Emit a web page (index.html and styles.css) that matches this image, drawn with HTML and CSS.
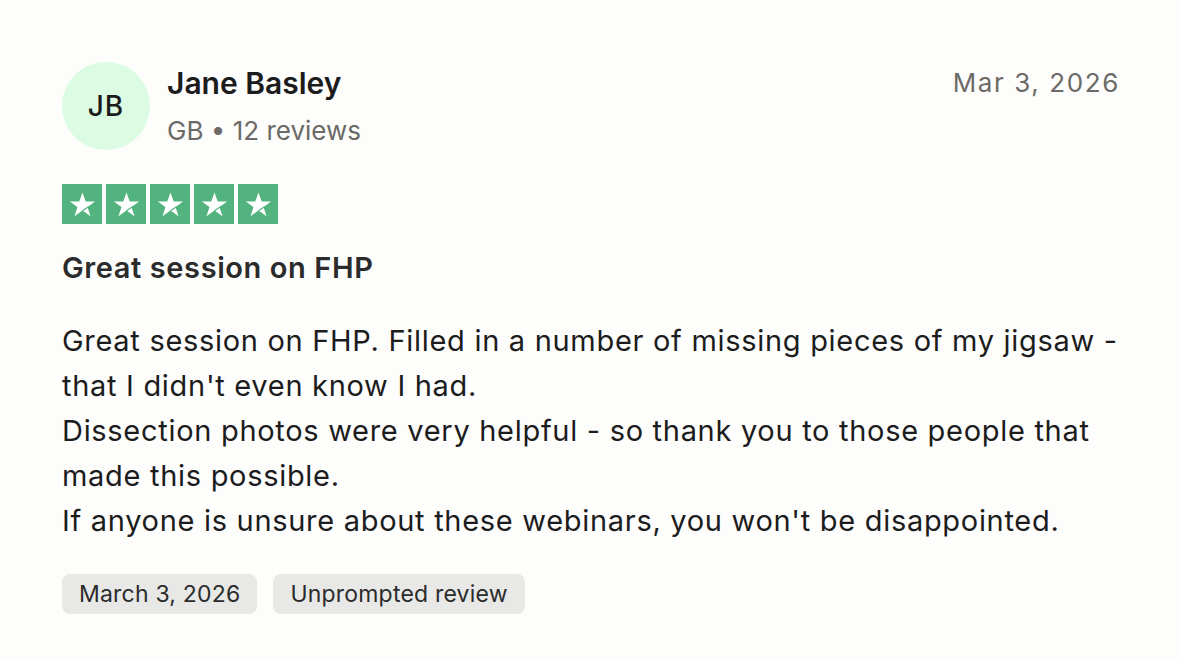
FILE: index.html
```html
<!DOCTYPE html>
<html lang="en">
<head>
<meta charset="utf-8">
<link rel="stylesheet" href="styles.css">
</head>
<body>
<article class="review">
  <header class="head">
    <div class="user">
      <div class="avatar">JB</div>
      <div class="info">
        <div class="name">Jane Basley</div>
        <div class="meta">GB • 12 reviews</div>
      </div>
    </div>
    <time class="date">Mar 3, 2026</time>
  </header>
  <div class="stars">
    <span class="star"><svg viewBox="0 0 24 24"><path d="M12 2.8l2.5 6.9h7.3l-5.9 4.3 2.3 7L12 16.7l-6.2 4.3 2.3-7-5.9-4.3h7.3z" fill="#fff"/><path d="M12 16.9l4.6-3.2" stroke="#52b37f" stroke-width="0.9"/></svg></span>
    <span class="star"><svg viewBox="0 0 24 24"><path d="M12 2.8l2.5 6.9h7.3l-5.9 4.3 2.3 7L12 16.7l-6.2 4.3 2.3-7-5.9-4.3h7.3z" fill="#fff"/><path d="M12 16.9l4.6-3.2" stroke="#52b37f" stroke-width="0.9"/></svg></span>
    <span class="star"><svg viewBox="0 0 24 24"><path d="M12 2.8l2.5 6.9h7.3l-5.9 4.3 2.3 7L12 16.7l-6.2 4.3 2.3-7-5.9-4.3h7.3z" fill="#fff"/><path d="M12 16.9l4.6-3.2" stroke="#52b37f" stroke-width="0.9"/></svg></span>
    <span class="star"><svg viewBox="0 0 24 24"><path d="M12 2.8l2.5 6.9h7.3l-5.9 4.3 2.3 7L12 16.7l-6.2 4.3 2.3-7-5.9-4.3h7.3z" fill="#fff"/><path d="M12 16.9l4.6-3.2" stroke="#52b37f" stroke-width="0.9"/></svg></span>
    <span class="star"><svg viewBox="0 0 24 24"><path d="M12 2.8l2.5 6.9h7.3l-5.9 4.3 2.3 7L12 16.7l-6.2 4.3 2.3-7-5.9-4.3h7.3z" fill="#fff"/><path d="M12 16.9l4.6-3.2" stroke="#52b37f" stroke-width="0.9"/></svg></span>
  </div>
  <h2 class="title">Great session on FHP</h2>
  <p class="body">Great session on FHP. Filled in a number of missing pieces of my jigsaw - that I didn't even know I had.<br>Dissection photos were very helpful - so thank you to those people that made this possible.<br>If anyone is unsure about these webinars, you won't be disappointed.</p>
  <div class="tags">
    <span class="tag">March 3, 2026</span>
    <span class="tag">Unprompted review</span>
  </div>
</article>
</body>
</html>
```
FILE: styles.css
```css
html, body {
  margin: 0;
  padding: 0;
  background: #fdfdfc;
}
body {
  font-family: Inter, "Liberation Sans", sans-serif;
  color: #1c1c1c;
}
.review {
  width: 1058px;
  padding: 62px 62px 0 62px;
}
.head {
  display: flex;
  justify-content: space-between;
  align-items: flex-start;
}
.user {
  display: flex;
  align-items: flex-start;
  gap: 17px;
}
.avatar {
  width: 88px;
  height: 88px;
  border-radius: 50%;
  background: #dcfbe3;
  display: flex;
  align-items: center;
  justify-content: center;
  font-size: 28px;
  font-weight: 500;
  letter-spacing: 1px;
  color: #1c1c1c;
}
.info {
  padding-top: 3px;
}
.name {
  font-size: 30px;
  font-weight: 600;
  line-height: 36px;
  color: #1c1c1c;
}
.meta {
  margin-top: 14px;
  font-size: 26px;
  line-height: 32px;
  color: #6b6a66;
}
.date {
  font-size: 26px;
  line-height: 32px;
  letter-spacing: 1.6px;
  color: #6b6a66;
  padding-top: 5px;
}
.stars {
  display: flex;
  gap: 4px;
  margin-top: 34px;
}
.star {
  width: 40px;
  height: 40px;
  background: #52b37f;
  display: flex;
  align-items: center;
  justify-content: center;
}
.star svg {
  width: 31px;
  height: 31px;
}
.title {
  margin: 26px 0 0 0;
  font-size: 29px;
  font-weight: 600;
  line-height: 36px;
  letter-spacing: 0.6px;
  color: #2b2b2b;
}
.body {
  margin: 32px 0 0 0;
  font-size: 29px;
  line-height: 45px;
  letter-spacing: 0.7px;
  color: #1c1c1c;
}
.tags {
  display: flex;
  gap: 16px;
  margin-top: 31px;
}
.tag {
  background: #e8e8e6;
  border-radius: 8px;
  font-size: 23px;
  line-height: 40px;
  letter-spacing: 0.2px;
  padding: 0 17px;
  color: #2b2b2b;
}
```
